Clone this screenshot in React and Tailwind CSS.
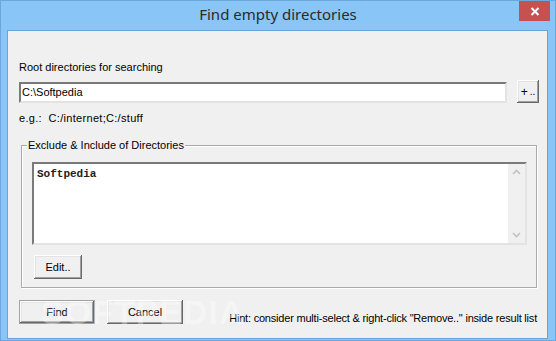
import React from 'react';

const raised =
  'bg-[#f0f0f0] shadow-[inset_-1px_-1px_#696969,inset_1px_1px_#ffffff,inset_-2px_-2px_#a0a0a0,inset_2px_2px_#e3e3e3]';

const Button = ({ children, className = '' }) => (
  <button className={`${raised} flex items-center justify-center text-[11px] text-black ${className}`}>
    {children}
  </button>
);

const Chevron = ({ down }) => (
  <svg width="9" height="6" viewBox="0 0 9 6" className="text-[#c2c2c2]">
    <path d={down ? 'M1 1 L4.5 4.5 L8 1' : 'M1 5 L4.5 1.5 L8 5'} fill="none" stroke="currentColor" strokeWidth="1.6" />
  </svg>
);

export default function App() {
  return (
    <div className="w-[556px] h-[341px] bg-[#89c5f7] border border-[#6ea6dc] flex flex-col font-['Liberation_Sans',Arial,sans-serif] overflow-hidden relative">
      {/* title bar */}
      <div className="h-[29px] relative flex items-center justify-center shrink-0">
        <span className="text-[15px] text-[#2b2b2b] font-['Noto_Sans',sans-serif] -mt-[2px]">Find empty directories</span>
        <div className="absolute right-[5px] top-0 w-[31px] h-[20px] bg-[#c75050] flex items-center justify-center">
          <svg width="10" height="9" viewBox="0 0 10 9">
            <path d="M1.5 1 L8.5 8 M8.5 1 L1.5 8" stroke="#ffffff" strokeWidth="2" />
          </svg>
        </div>
      </div>

      {/* client area */}
      <div className="flex-1 ml-[6px] mr-[7px] mb-[1px] border border-[#6aa3da] bg-[#f0f0f0] flex flex-col pl-[11px] pt-[29px] text-[11px] text-black">
        <div className="leading-[14px]">Root directories for searching</div>

        <div className="flex items-center mt-[7px]">
          <div className="w-[488px] h-[21px] bg-white border-2 border-t-[#7a7a7a] border-l-[#7a7a7a] border-r-[#e3e3e3] border-b-[#e3e3e3] flex items-center pl-[1px] leading-[14px]">
            C:\Softpedia
          </div>
          <Button className="ml-[10px] w-[22px] h-[23px] -mt-[1px]">
            <span className="text-[12px]">+</span>
            <span className="ml-[2px] text-[10px]">..</span>
          </Button>
        </div>

        <div className="leading-[14px] mt-[8px] tracking-[0.3px]">e.g.:&nbsp; C:/internet;C:/stuff</div>

        <div className="relative mt-[20px] ml-[2px] w-[516px] border border-[#aaaaaa] shadow-[1px_1px_0_#ffffff,inset_1px_1px_0_#ffffff] pl-[10px] pt-[16px] pb-[8px]">
          <span className="absolute -top-[8px] left-[5px] px-[1px] bg-[#f0f0f0] leading-[14px]">
            Exclude &amp; Include of Directories
          </span>
          <div className="w-[495px] h-[83px] bg-white border-2 border-t-[#7a7a7a] border-l-[#7a7a7a] border-r-[#e3e3e3] border-b-[#e3e3e3] flex">
            <div className="flex-1 pl-[3px] pt-[3px] font-['Liberation_Mono','Courier_New',monospace] text-[11px] font-bold leading-[14px] text-[#222]">
              Softpedia
            </div>
            <div className="w-[17px] bg-[#f0f0f0] flex flex-col items-center justify-between py-[5px]">
              <Chevron />
              <Chevron down />
            </div>
          </div>
          <Button className="mt-[10px] ml-[2px] w-[48px] h-[24px]">Edit..</Button>
        </div>

        <div className="flex items-end mt-[12px]">
          <Button className="w-[76px] h-[24px] border border-[#a0a0a0]">Find</Button>
          <Button className="ml-[12px] w-[76px] h-[24px]">Cancel</Button>
          <div className="ml-auto mr-[10px] leading-[14px] mb-[-1px] tracking-[-0.2px]">
            Hint: consider multi-select &amp; right-click "Remove.." inside result list
          </div>
        </div>
      </div>

      {/* watermark */}
      <div className="absolute left-[40px] top-[286px] text-[34px] font-bold tracking-[1px] text-white/35 pointer-events-none font-['Liberation_Sans',sans-serif]">
        SOFTPEDIA
      </div>
    </div>
  );
}
